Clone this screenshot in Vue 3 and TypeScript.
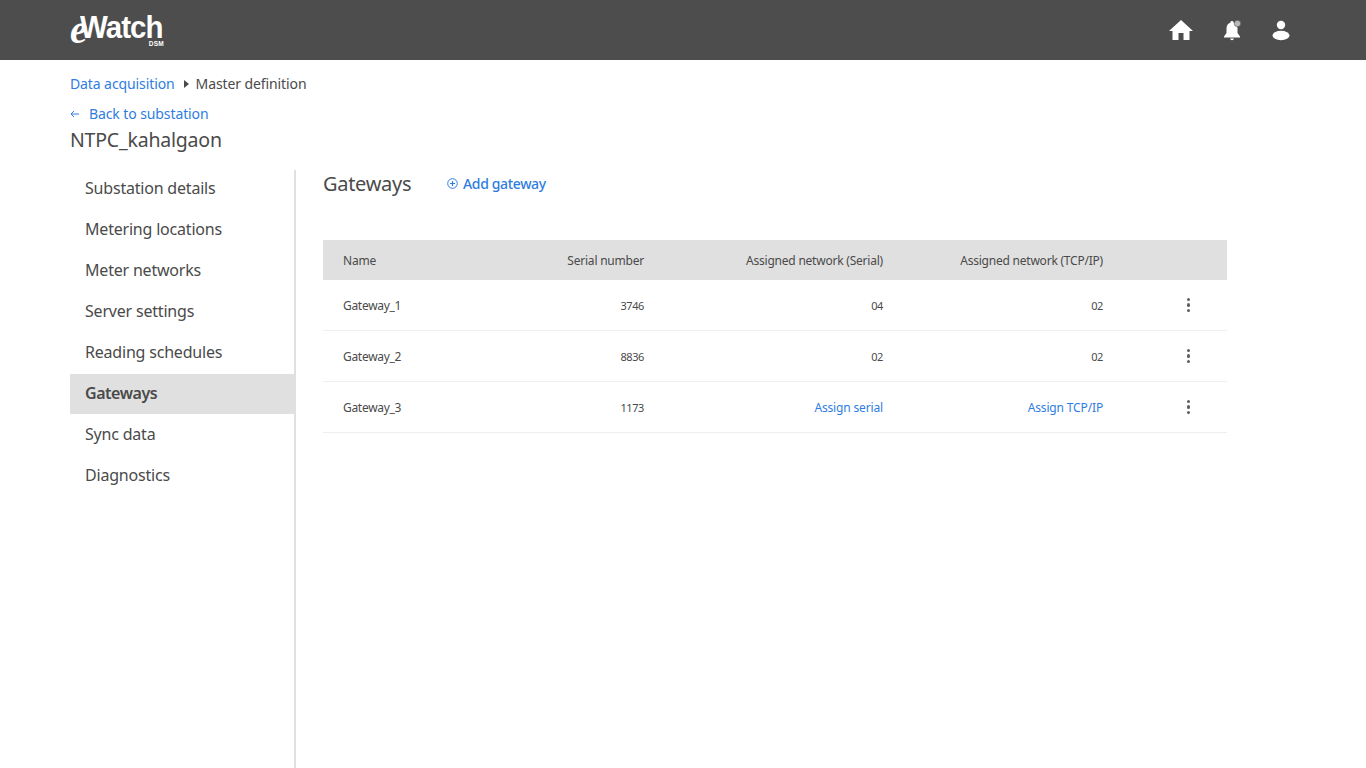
<script setup lang="ts">
const nav: string[] = ['Substation details', 'Metering locations', 'Meter networks', 'Server settings', 'Reading schedules', 'Gateways', 'Sync data', 'Diagnostics']
interface Row { name: string; serial: string; s: string; t: string; link?: boolean }
const rows: Row[] = [
  { name: 'Gateway_1', serial: '3746', s: '04', t: '02' },
  { name: 'Gateway_2', serial: '8836', s: '02', t: '02' },
  { name: 'Gateway_3', serial: '1173', s: 'Assign serial', t: 'Assign TCP/IP', link: true },
]
</script>

<template>
  <div class="page">
    <header class="top">
      <div class="logo">
        <span class="logo-w">Watch</span><span class="logo-e">e</span><span class="logo-dsm">DSM</span>
      </div>
      <div class="top-icons">
        <svg width="26" height="24" viewBox="0 0 26 24"><path fill="#fff" d="M13 2 1 13h3.500v9h6v-7h5v7h6v-9H25z"/></svg>
        <svg width="24" height="24" viewBox="0 0 24 24">
          <path fill="#fff" d="M12 3c-.9 0-1.500.6-1.500 1.400C7.800 5.200 6.500 7.600 6.500 10.500v4.500L4 18.500v1h16v-1L17.500 15v-4.500C17.500 7.600 16 5.200 13.500 4.400 13.500 3.600 12.900 3 12 3z"/>
          <path fill="#fff" d="M10.200 20.500h3.600a1.800 1.800 0 0 1-3.600 0z"/>
          <circle cx="17.500" cy="5.500" r="3.200" fill="#b9b9b9" stroke="#4d4d4d" stroke-width=".6"/>
        </svg>
        <svg class="user" width="24" height="24" viewBox="0 0 24 24"><circle cx="12" cy="7" r="4.200" fill="#fff"/><ellipse cx="12" cy="17.500" rx="8.500" ry="4.700" fill="#fff"/></svg>
      </div>
    </header>

    <div class="crumbs">
      <a class="link">Data acquisition</a>
      <svg class="caret" width="5" height="8" viewBox="0 0 5 8"><path fill="#4a4a4a" d="M0 0l5 4-5 4z"/></svg>
      <span>Master definition</span>
    </div>
    <a class="back link">
      <svg width="10" height="8" viewBox="0 0 10 8"><path fill="none" stroke="#2f7de1" d="M9 4H1.500M4 1 1 4l3 3"/></svg>
      Back to substation
    </a>
    <h1 class="station">NTPC_kahalgaon</h1>

    <div class="body">
      <nav class="side">
        <div v-for="n in nav" :key="n" class="side-item" :class="{ active: n === 'Gateways' }">{{ n }}</div>
      </nav>
      <main class="main">
        <div class="title-row">
          <h2>Gateways</h2>
          <a class="add link">
            <svg width="11" height="11" viewBox="0 0 11 11"><circle cx="5.500" cy="5.500" r="4.800" fill="none" stroke="#2f7de1"/><path stroke="#2f7de1" stroke-width="1.200" d="M3 5.500h5M5.500 3v5"/></svg>
            Add gateway
          </a>
        </div>
        <div class="table">
          <div class="row head">
            <div>Name</div><div class="r">Serial number</div><div class="r">Assigned network (Serial)</div><div class="r">Assigned network (TCP/IP)</div><div></div>
          </div>
          <div v-for="r in rows" :key="r.name" class="row">
            <div class="cell-name">{{ r.name }}</div>
            <div class="r num">{{ r.serial }}</div>
            <div class="r num" :class="{ link: r.link }">{{ r.s }}</div>
            <div class="r num" :class="{ link: r.link }">{{ r.t }}</div>
            <div class="dots"><i></i><i></i><i></i></div>
          </div>
        </div>
      </main>
    </div>
  </div>
</template>

<style>
html, body { margin: 0; background: #fff; }
</style>

<style scoped>
.page { height: 768px; overflow: hidden; font-family: "Noto Sans", "Open Sans", sans-serif; color: #4a4a4a; font-size: 14px; letter-spacing: -0.1px; display: flex; flex-direction: column; }
.top { height: 60px; flex: none; background: #4d4d4d; display: flex; align-items: center; justify-content: space-between; padding: 0 73px 0 70px; }
.logo { position: relative; width: 96px; height: 48px; color: #fff; letter-spacing: 0; }
.logo-e { position: absolute; left: 0; top: 6px; font: italic 700 39px "Liberation Serif", serif; line-height: 36px; }
.logo-w { position: absolute; left: 10px; top: 9px; font: 700 31px "Liberation Sans", sans-serif; line-height: 25px; letter-spacing: -1px; transform-origin: left; transform: scaleX(.95); white-space: nowrap; }
.logo-dsm { position: absolute; right: 2px; top: 34px; font: 700 6.500px "Liberation Sans", sans-serif; line-height: 8px; letter-spacing: .3px; }
.top-icons { display: flex; align-items: center; gap: 26px; }
.user { margin-left: -1px; }
.link { color: #2f7de1; }
.crumbs { margin: 14px 0 0 70px; height: 19px; line-height: 19px; display: flex; align-items: center; gap: 6px; }
.caret { margin: 0 1px 0 3px; }
.back { margin: 11px 0 0 70px; height: 19px; line-height: 19px; display: flex; align-items: center; gap: 9px; }
.station { margin: 3px 0 0 70px; font-size: 19.500px; font-weight: 400; line-height: 28px; height: 28px; letter-spacing: -0.2px; }
.body { flex: 1; display: flex; margin: 16px 0 0 70px; min-height: 0; }
.side { width: 224px; border-right: 2px solid #e0e0e0; box-sizing: content-box; }
.side-item { height: 40px; margin-bottom: 1px; line-height: 38px; padding-left: 15px; font-size: 16px; letter-spacing: -0.2px; }
.side-item:first-child { margin-top: -1px; }
.side-item.active { background: #e0e0e0; font-weight: 600; letter-spacing: -0.45px; }
.main { width: 904px; margin-left: 27px; }
.title-row { display: flex; align-items: center; height: 30px; margin-bottom: 40px; }
.title-row h2 { margin: -1px 0 1px; font-size: 20px; font-weight: 400; line-height: 30px; width: 123px; letter-spacing: -0.3px; }
.add { display: flex; align-items: center; gap: 5px; font-weight: 500; font-size: 14px; letter-spacing: -0.35px; margin: -4px 0 0 1px; }
.row { display: grid; grid-template-columns: 180px 121px 239px 220px 1fr; height: 51px; box-sizing: border-box; align-items: center; padding-left: 20px; border-bottom: 1px solid #eee; font-size: 12px; letter-spacing: -0.22px; }
.row.head { height: 40px; background: #e0e0e0; border: 0; }
.r { text-align: right; white-space: nowrap; }
.cell-name { letter-spacing: -0.3px; }
.num { font-size: 11px; letter-spacing: -0.4px; }
.link.num { font-size: 12px; letter-spacing: -0.15px; }
.dots { display: flex; flex-direction: column; align-items: center; gap: 2px; margin-left: 45.500px; width: 80px; }
.dots i { width: 3.500px; height: 3.500px; border-radius: 50%; background: #5f5f5f; }
</style>
